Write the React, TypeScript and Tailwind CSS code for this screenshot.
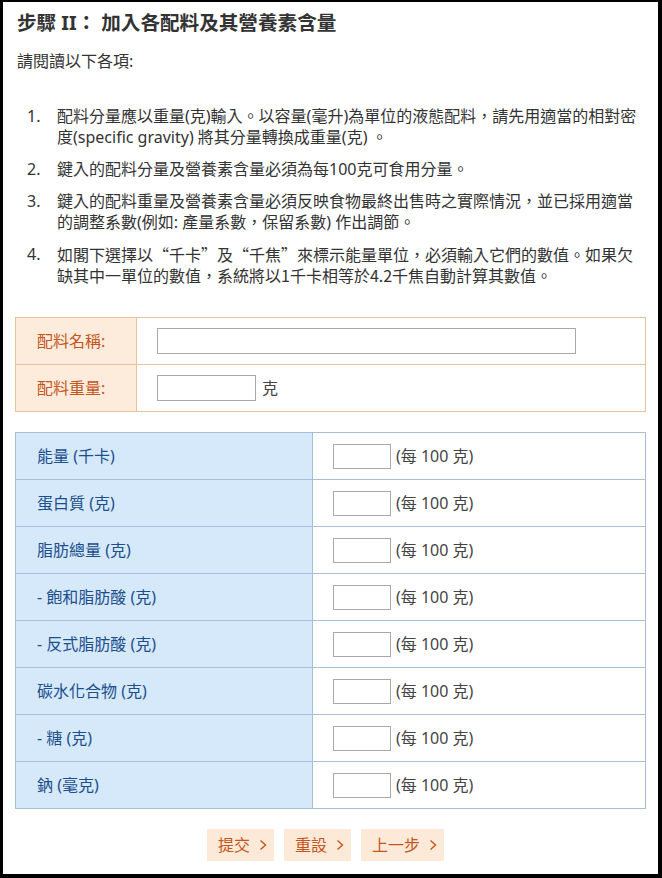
import React from 'react';

const notes: { text: string; cjk?: boolean }[] = [
  { text: '配料分量應以重量(克)輸入。以容量(毫升)為單位的液態配料，請先用適當的相對密度(specific gravity) 將其分量轉換成重量(克) 。' },
  { text: '鍵入的配料分量及營養素含量必須為每100克可食用分量。' },
  { text: '鍵入的配料重量及營養素含量必須反映食物最終出售時之實際情況，並已採用適當的調整系數(例如: 產量系數，保留系數) 作出調節。' },
  { text: '如閣下選擇以“千卡”及“千焦”來標示能量單位，必須輸入它們的數值。如果欠缺其中一單位的數值，系統將以1千卡相等於4.2千焦自動計算其數值。', cjk: true },
];

const nutrients = [
  '能量 (千卡)',
  '蛋白質 (克)',
  '脂肪總量 (克)',
  '- 飽和脂肪酸 (克)',
  '- 反式脂肪酸 (克)',
  '碳水化合物 (克)',
  '- 糖 (克)',
  '鈉 (毫克)',
];

const Chevron = () => (
  <svg width="8" height="12" viewBox="0 0 8 12" className="ml-[9px]">
    <path d="M1.5 1.5 L6.5 6 L1.5 10.5" fill="none" stroke="currentColor" strokeWidth="1.4" />
  </svg>
);

export default function App() {
  return (
    <div
      className="w-[662px] h-[878px] bg-white border-l-[3px] border-t-2 border-r-4 border-b-4 border-black text-[#333] overflow-hidden"
      style={{ fontFamily: '"Noto Sans", "Noto Sans CJK TC", sans-serif' }}
    >
      <div className="px-[12px]">
        <h1 className="pl-[2px] pt-[8px] text-[19.6px] leading-[26px] font-bold text-[#333]">
          步驟 II： 加入各配料及其營養素含量
        </h1>
        <p className="pl-[2px] mt-[14px] text-[16px] leading-[22px]">請閱讀以下各項:</p>

        <ol className="mt-[34px] pr-[4px]">
          {notes.map((n, i) => (
            <li key={i} className="flex text-[16px] leading-[21px] mb-[11px]">
              <span className="w-[42px] shrink-0 pl-[12px]">{i + 1}.</span>
              <span style={n.cjk ? { fontFamily: '"Noto Sans CJK TC", sans-serif' } : undefined}>{n.text}</span>
            </li>
          ))}
        </ol>

        <div className="mt-[31px] border border-[#e6c49c] text-[16px]">
          <div className="flex h-[47px] border-b border-[#e6c49c]">
            <div className="w-[121px] shrink-0 bg-[#fdecdc] border-r border-[#e6c49c] flex items-center pl-[21px] text-[#c4561d]">
              配料名稱:
            </div>
            <div className="flex items-center pl-[20px]">
              <div className="w-[419px] h-[26px] border border-[#a9a9a9]" />
            </div>
          </div>
          <div className="flex h-[46px]">
            <div className="w-[121px] shrink-0 bg-[#fdecdc] border-r border-[#e6c49c] flex items-center pl-[21px] text-[#c4561d]">
              配料重量:
            </div>
            <div className="flex items-center pl-[20px]">
              <div className="w-[99px] h-[26px] border border-[#a9a9a9]" />
              <span className="ml-[6px] text-[#444]">克</span>
            </div>
          </div>
        </div>

        <div className="mt-[20px] border border-[#a8bfd7] text-[16px]">
          {nutrients.map((n, i) => (
            <div
              key={i}
              className={i < nutrients.length - 1 ? 'flex h-[47px] border-b border-[#a8bfd7]' : 'flex h-[46px]'}
            >
              <div className="w-[297px] shrink-0 bg-[#d5e9fb] border-r border-[#a8bfd7] flex items-center pl-[21px] text-[#1d4f8c]">
                {n}
              </div>
              <div className="flex items-center pl-[20px]">
                <div className="w-[58px] h-[25px] border border-[#a9a9a9]" />
                <span className="ml-[5px] text-[#444]">(每 100 克)</span>
              </div>
            </div>
          ))}
        </div>

        <div className="mt-[20px] flex justify-center gap-[10px] pr-[10px] text-[16px]">
          {['提交', '重設', '上一步'].map((b) => (
            <button
              key={b}
              className="h-[32px] pl-[11px] pr-[7px] flex items-center bg-[#fde9d7] text-[#c4561d]"
            >
              {b}
              <Chevron />
            </button>
          ))}
        </div>
      </div>
    </div>
  );
}
